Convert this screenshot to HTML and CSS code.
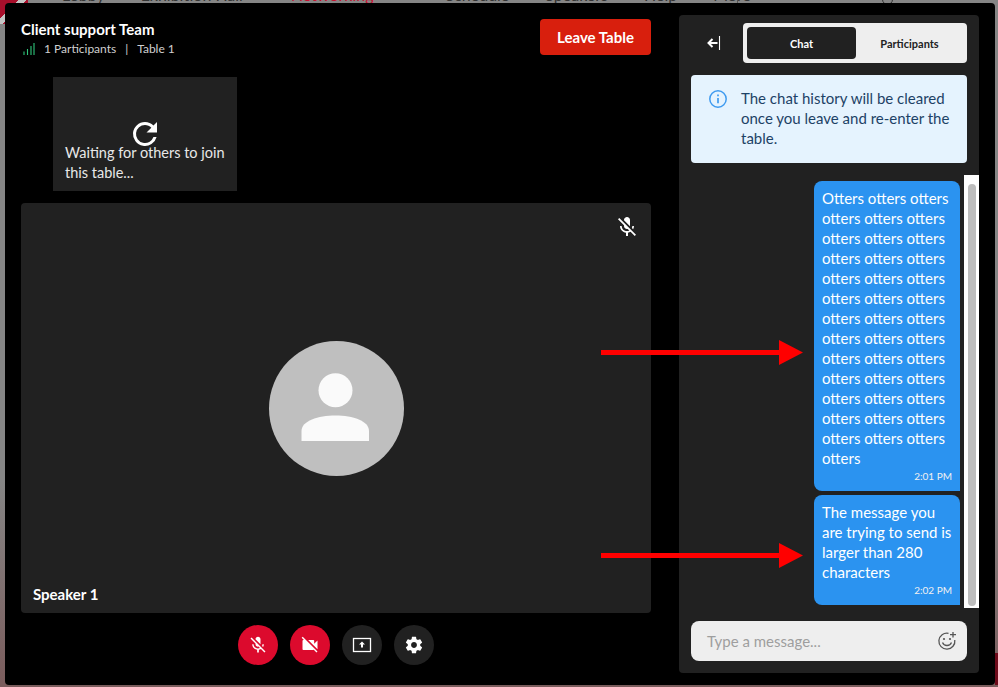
FILE: index.html
```html
<!DOCTYPE html>
<html lang="en">
<head>
    <meta charset="UTF-8">
    <meta name="viewport" content="width=device-width, initial-scale=1.0">
    <title>Client support Team</title>
    <link rel="stylesheet" href="styles.css">
</head>
<body>
    <div class="backdrop">
        <span class="backdrop-flag"></span>
        <div class="backdrop-nav">
            <span>Lobby</span>
            <span>Exhibition Hall</span>
            <span class="backdrop-red">Networking</span>
            <span>Schedule</span>
            <span>Speakers</span>
            <span>Help</span>
            <span>More</span>
        </div>
        <span class="backdrop-sep"></span>
        <span class="backdrop-search"></span>
        <span class="backdrop-corner"></span>
    </div>

    <div class="modal">
        <section class="stage">
            <header class="stage-head">
                <div>
                    <h1 class="room-name">Client support Team</h1>
                    <div class="room-meta">
                        <svg class="signal" width="12" height="12" viewBox="0 0 12 12">
                            <path d="M1 12V8.500M4.500 12V6M8 12V3M11 12V0" stroke="#2fc67a" stroke-width="1.100" fill="none"/>
                        </svg>
                        <span>1 Participants</span>
                        <span class="meta-sep">|</span>
                        <span>Table 1</span>
                    </div>
                </div>
                <button class="leave-btn">Leave Table</button>
            </header>

            <div class="waiting-row">
                <div class="waiting-card">
                    <svg class="refresh" width="36" height="36" viewBox="0 0 24 24">
                        <path fill="#fff" d="M17.650 6.350A7.960 7.960 0 0 0 12 4a8 8 0 1 0 7.730 10h-2.080A6 6 0 1 1 12 6c1.660 0 3.140.69 4.220 1.780L13 11h7V4l-2.350 2.350z"/>
                    </svg>
                    <p>Waiting for others to join this table...</p>
                </div>
            </div>

            <div class="speaker-tile">
                <svg class="tile-mic" width="24" height="24" viewBox="0 0 24 24">
                    <path fill="#fff" d="M19 11h-1.700c0 .74-.16 1.430-.43 2.050l1.230 1.230c.56-.98.900-2.090.900-3.280zm-4.020.170c0-.060.020-.110.020-.170V5c0-1.660-1.340-3-3-3S9 3.340 9 5v.180l5.980 5.990zM4.270 3L3 4.270l6.010 6.010V11c0 1.660 1.330 3 2.990 3 .220 0 .44-.030.650-.080l1.660 1.660c-.71.330-1.500.520-2.310.520-2.760 0-5.300-2.100-5.300-5.100H5c0 3.410 2.720 6.230 6 6.720V21h2v-3.280c.91-.130 1.770-.450 2.540-.900L19.730 21 21 19.730 4.270 3z"/>
                </svg>
                <div class="avatar">
                    <svg width="80" height="80" viewBox="0 0 80 80">
                        <circle cx="39.500" cy="22.200" r="17" fill="#fafafa"/>
                        <path fill="#fafafa" d="M5.500 73V63C5.500 53 22 47.500 39.500 47.500S73 53 73 63v10z"/>
                    </svg>
                </div>
                <span class="speaker-name">Speaker 1</span>
            </div>

            <div class="controls">
                <button class="ctrl ctrl-off">
                    <svg width="20" height="20" viewBox="0 0 24 24">
                        <path fill="#fff" d="M19 11h-1.700c0 .74-.16 1.430-.43 2.050l1.230 1.230c.56-.98.900-2.090.900-3.280zm-4.020.170c0-.060.020-.110.020-.170V5c0-1.660-1.340-3-3-3S9 3.340 9 5v.180l5.980 5.990zM4.270 3L3 4.270l6.010 6.010V11c0 1.660 1.330 3 2.990 3 .220 0 .44-.030.650-.080l1.660 1.660c-.71.330-1.500.520-2.310.520-2.760 0-5.300-2.100-5.300-5.100H5c0 3.410 2.720 6.230 6 6.720V21h2v-3.280c.91-.130 1.770-.450 2.540-.900L19.730 21 21 19.730 4.270 3z"/>
                    </svg>
                </button>
                <button class="ctrl ctrl-off">
                    <svg width="20" height="20" viewBox="0 0 24 24">
                        <path fill="#fff" d="M21 6.500l-4 4V7c0-.55-.45-1-1-1H9.820L21 17.180V6.500zM3.270 2L2 3.270 4.730 6H4c-.55 0-1 .45-1 1v10c0 .55.450 1 1 1h12c.210 0 .390-.080.540-.180L19.730 21 21 19.730 3.270 2z"/>
                    </svg>
                </button>
                <button class="ctrl">
                    <svg width="20" height="20" viewBox="0 0 20 20">
                        <rect x="1.500" y="3.500" width="17" height="13" fill="none" stroke="#fff" stroke-width="1.300"/>
                        <path fill="#fff" d="M10 6.500l3 3h-2v3H9v-3H7z"/>
                    </svg>
                </button>
                <button class="ctrl">
                    <svg width="20" height="20" viewBox="0 0 24 24">
                        <path fill="#fff" d="M19.430 12.980c.040-.320.070-.640.070-.980s-.030-.660-.070-.980l2.110-1.650c.190-.150.240-.420.120-.640l-2-3.460c-.120-.220-.390-.300-.610-.220l-2.490 1c-.520-.400-1.080-.730-1.690-.980l-.380-2.650A.488.488 0 0 0 14 2h-4c-.250 0-.460.180-.490.420l-.380 2.650c-.610.250-1.170.590-1.690.980l-2.490-1c-.230-.090-.490 0-.610.220l-2 3.460c-.130.220-.070.490.120.640l2.110 1.650c-.040.320-.070.650-.070.980s.030.660.070.980l-2.110 1.650c-.190.150-.240.420-.120.640l2 3.460c.120.220.390.300.610.220l2.490-1c.520.400 1.080.730 1.690.980l.380 2.650c.030.240.240.420.490.420h4c.250 0 .460-.180.490-.420l.380-2.650c.610-.250 1.170-.590 1.690-.980l2.490 1c.230.090.490 0 .610-.220l2-3.460c.120-.220.070-.490-.120-.640l-2.110-1.650zM12 15.500c-1.930 0-3.500-1.570-3.500-3.500s1.570-3.500 3.500-3.500 3.500 1.570 3.500 3.500-1.570 3.500-3.500 3.500z"/>
                    </svg>
                </button>
            </div>
        </section>

        <aside class="chat">
            <div class="chat-head">
                <svg class="collapse" width="16" height="16" viewBox="0 0 16 16">
                    <path d="M13.500 1v14" stroke="#fff" stroke-width="1.100" fill="none"/>
                    <path d="M11.500 8H2.500M6.500 4L2.500 8l4 4" stroke="#fff" stroke-width="2" fill="none"/>
                </svg>
                <div class="tabs">
                    <button class="tab tab-active">Chat</button>
                    <button class="tab">Participants</button>
                </div>
            </div>

            <div class="notice">
                <svg width="20" height="20" viewBox="0 0 20 20">
                    <circle cx="10" cy="10" r="8.200" fill="none" stroke="#3f9bf0" stroke-width="1.500"/>
                    <path d="M10 9v5.200M10 5.600v1.700" stroke="#3f9bf0" stroke-width="1.700" fill="none"/>
                </svg>
                <p>The chat history will be cleared once you leave and re-enter the table.</p>
            </div>

            <div class="messages">
                <div class="message-list">
                    <div class="bubble">
                        <p>Otters otters otters otters otters otters otters otters otters otters otters otters otters otters otters otters otters otters otters otters otters otters otters otters otters otters otters otters otters otters otters otters otters otters otters otters otters otters otters otters</p>
                        <time>2:01 PM</time>
                    </div>
                    <div class="bubble">
                        <p>The message you are trying to send is larger than 280 characters</p>
                        <time>2:02 PM</time>
                    </div>
                </div>
                <div class="scroll-track"><div class="scroll-thumb"></div></div>
            </div>

            <div class="composer">
                <span class="composer-hint">Type a message...</span>
                <svg width="20" height="20" viewBox="0 0 20 20" fill="none" stroke="#555">
                    <path stroke-width="1.300" d="M11.500 2.300A8 8 0 1 0 17.800 9"/>
                    <path stroke-width="1.300" d="M16 1v5.500M13 3.700h6"/>
                    <path stroke-width="1.300" d="M5.500 11.500c.8 2 2.500 3 4.500 3s3.700-1 4.500-3"/>
                    <circle cx="7" cy="8" r="1.100" fill="#555" stroke="none"/>
                    <circle cx="13" cy="8" r="1.100" fill="#555" stroke="none"/>
                </svg>
            </div>
        </aside>
    </div>

    <svg class="arrow arrow-one" width="202" height="25" viewBox="0 0 202 25">
        <path fill="#ff0000" d="M0 10h178V0l24 12.500-24 12.500V15H0z"/>
    </svg>
    <svg class="arrow arrow-two" width="202" height="25" viewBox="0 0 202 25">
        <path fill="#ff0000" d="M0 10h178V0l24 12.500-24 12.500V15H0z"/>
    </svg>
</body>
</html>
```

FILE: styles.css
```css
* {
    box-sizing: border-box;
}

html, body {
    height: 100%;
}

body {
    margin: 0;
    position: relative;
    overflow: hidden;
    background: #858585;
    font-family: 'Lato', 'Liberation Sans', sans-serif;
    color: #fff;
}

button {
    font-family: inherit;
    border: none;
    cursor: pointer;
}

p, h1 {
    margin: 0;
}

.backdrop {
    position: absolute;
    inset: 0;
    overflow: hidden;
    background: linear-gradient(#858585 70%, #7a5c5c);
}

.backdrop-flag {
    position: absolute;
    left: 0;
    top: 0;
    width: 28px;
    height: 24px;
    background: linear-gradient(135deg, #a80f2b 0 35%, #c4c4c4 35% 50%, #a80f2b 50%);
}

.backdrop-sep {
    position: absolute;
    left: 737px;
    top: 0;
    width: 1px;
    height: 3px;
    background: #555;
}

.backdrop-search {
    position: absolute;
    left: 882px;
    top: -6px;
    width: 11px;
    height: 11px;
    border: 1px solid #333;
    border-radius: 50%;
}

.backdrop-corner {
    position: absolute;
    right: 0;
    bottom: 2px;
    width: 3px;
    height: 32px;
    background: #6d0a1a;
}

.backdrop-nav {
    display: flex;
    gap: 36px;
    padding-left: 62px;
    margin-top: -15px;
    font-size: 16px;
    color: #333;
}

.backdrop-red {
    color: #c8102e;
    margin: 0 36px 0 12px;
}

.modal {
    position: absolute;
    left: 5px;
    top: 3px;
    width: 990px;
    height: 682px;
    display: flex;
    background: #000;
    border-radius: 4px;
}

.stage {
    flex: none;
    width: 674px;
    padding: 16px 0 0 16px;
}

.stage-head {
    display: flex;
    justify-content: space-between;
    align-items: flex-start;
    width: 630px;
    height: 58px;
}

.room-name {
    font-size: 15px;
    line-height: 20px;
    font-weight: 700;
}

.room-meta {
    display: flex;
    align-items: center;
    gap: 9px;
    margin-top: 1px;
    padding-left: 2px;
    font-size: 12px;
    line-height: 18px;
    color: #d0d0d0;
}

.leave-btn {
    width: 111px;
    height: 36px;
    background: #d81f0d;
    color: #fff;
    font-size: 15px;
    font-weight: 700;
    border-radius: 4px;
}

.waiting-row {
    padding-left: 32px;
}

.waiting-card {
    width: 184px;
    height: 114px;
    background: #212121;
    padding: 39px 4px 0 12px;
}

.refresh {
    display: block;
    margin: 0 0 -9px 62px;
}

.waiting-card p {
    font-size: 14.500px;
    line-height: 20px;
    color: #e8e8e8;
}

.speaker-tile {
    position: relative;
    display: flex;
    align-items: center;
    justify-content: center;
    width: 630px;
    height: 410px;
    margin-top: 12px;
    background: #212121;
    border-radius: 4px;
}

.tile-mic {
    position: absolute;
    top: 12px;
    right: 12px;
}

.avatar {
    display: flex;
    align-items: center;
    justify-content: center;
    width: 135px;
    height: 135px;
    border-radius: 50%;
    background: #bfbfbf;
}

.speaker-name {
    position: absolute;
    left: 12px;
    bottom: 9px;
    font-size: 15px;
    line-height: 20px;
    font-weight: 700;
}

.controls {
    display: flex;
    justify-content: center;
    gap: 12px;
    width: 630px;
    margin-top: 12px;
}

.ctrl {
    display: flex;
    align-items: center;
    justify-content: center;
    width: 40px;
    height: 40px;
    padding: 0;
    border-radius: 50%;
    background: #212121;
}

.ctrl-off {
    background: #dc0a2d;
}

.chat {
    flex: none;
    display: flex;
    flex-direction: column;
    width: 300px;
    height: 658px;
    margin-top: 12px;
    padding: 8px 0 0 12px;
    background: #212121;
    border-radius: 4px;
}

.chat-head {
    display: flex;
    align-items: center;
    height: 40px;
}

.collapse {
    margin-left: 15px;
}

.tabs {
    display: flex;
    width: 224px;
    height: 40px;
    margin-left: 21px;
    padding: 4px;
    background: #eeeeee;
    border-radius: 4px;
}

.tab {
    flex: 1;
    padding: 0;
    background: transparent;
    color: #212121;
    font-size: 11px;
    font-weight: 700;
    border-radius: 4px;
}

.tab-active {
    flex: none;
    width: 109px;
    background: #212121;
    color: #fff;
}

.notice {
    display: flex;
    gap: 13px;
    width: 276px;
    height: 88px;
    margin-top: 12px;
    padding: 14px 12px 0 17px;
    background: #e5f3fe;
    border-radius: 4px;
}

.notice svg {
    flex: none;
}

.notice p {
    margin-top: -1px;
    font-size: 15px;
    line-height: 20px;
    color: #1d4266;
}

.messages {
    display: flex;
    justify-content: flex-end;
    width: 288px;
    height: 433px;
    margin-top: 12px;
}

.message-list {
    display: flex;
    flex-direction: column;
    gap: 4px;
    width: 146px;
    padding-top: 6px;
    margin-right: 4px;
}

.bubble {
    padding: 7px 8px 9px;
    background: #2b93f0;
    border-radius: 8px 8px 0 8px;
}

.bubble p {
    font-size: 15px;
    line-height: 20px;
}

.bubble time {
    display: block;
    text-align: right;
    font-size: 10px;
    line-height: 14px;
    margin-top: 1px;
    margin-bottom: -1px;
    color: #f0f0f0;
}

.scroll-track {
    width: 15px;
    background: #fff;
    padding: 9px 3px 2px 4px;
}

.scroll-thumb {
    height: 100%;
    background: #bdbdbd;
    border-radius: 5px;
}

.composer {
    display: flex;
    align-items: center;
    justify-content: space-between;
    width: 276px;
    height: 40px;
    margin-top: 13px;
    padding: 0 10px 0 16px;
    background: #eeeeee;
    border-radius: 8px;
}

.composer-hint {
    font-size: 15px;
    color: #9e9e9e;
}

.arrow {
    position: absolute;
    left: 601px;
}

.arrow-one {
    top: 340px;
}

.arrow-two {
    top: 543px;
}
```
